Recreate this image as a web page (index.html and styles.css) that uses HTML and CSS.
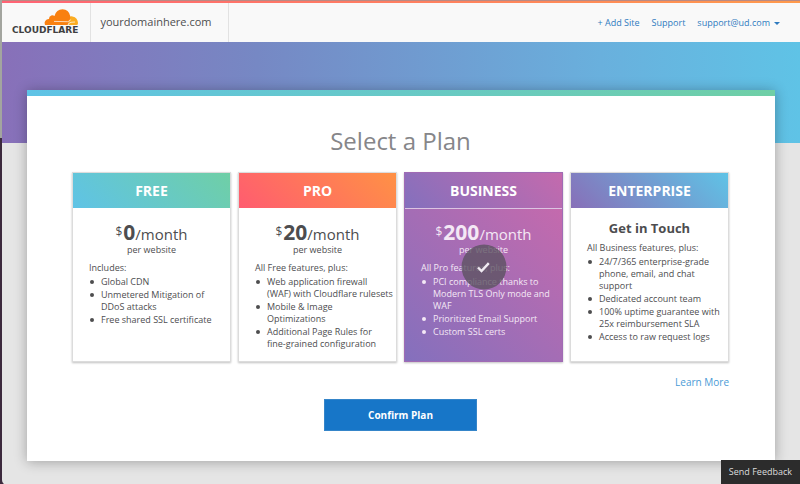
FILE: index.html
```html
<!DOCTYPE html>
<html lang="en">
<head>
    <meta charset="UTF-8">
    <meta name="viewport" content="width=device-width, initial-scale=1.0">
    <title>Select a Plan | Cloudflare</title>
    <link rel="stylesheet" href="styles.css">
</head>
<body>

<div class="page">
    <header class="topbar">
        <a class="logo" href="#" aria-label="Cloudflare">
            <svg class="logo-cloud" viewBox="0 0 34 16" aria-hidden="true">
                <path fill="#fbad22" d="M24 16 L25.5 11 L25 8 Q27 6.7 28.5 7.4 Q33.8 8.6 34 14 Q34 16 33 16Z"/>
                <path fill="#f98010" d="M1 16 Q0 13.5 1.2 12 Q2.6 10 5 10.1 Q4.9 7.4 7.3 6.5 Q9 6 10.5 7 Q12.3 0.4 18.5 0.3 Q24.8 .6 26.2 7 Q26.6 9 25.6 11.2 L23.8 16Z"/>
                <path fill="none" stroke="#fff" stroke-width=".7" d="M10 12.4 L23.5 12.7 Q26 12.4 26.5 10.6 M24 16 Q24.6 13.8 27 13.3 L31 13"/>
            </svg>
            <span class="logo-text">CLOUDFLARE</span>
        </a>
        <span class="domain">yourdomainhere.com</span>
        <nav class="nav">
            <a href="#">+ Add Site</a>
            <a href="#">Support</a>
            <a class="account" href="#">support@ud.com</a>
        </nav>
    </header>

    <main class="main">
        <section class="panel">
            <h1>Select a Plan</h1>

            <div class="plans">
                <article class="plan free">
                    <h2>FREE</h2>
                    <div class="plan-body">
                        <p class="price"><span class="currency">$</span><strong>0</strong>/month</p>
                        <p class="per">per website</p>
                        <p class="intro">Includes:</p>
                        <ul>
                            <li>Global CDN</li>
                            <li>Unmetered Mitigation of<br>DDoS attacks</li>
                            <li>Free shared SSL certificate</li>
                        </ul>
                    </div>
                </article>

                <article class="plan pro">
                    <h2>PRO</h2>
                    <div class="plan-body">
                        <p class="price"><span class="currency">$</span><strong>20</strong>/month</p>
                        <p class="per">per website</p>
                        <p class="intro">All Free features, plus:</p>
                        <ul>
                            <li>Web application firewall<br>(WAF) with Cloudflare rulesets</li>
                            <li>Mobile &amp; Image<br>Optimizations</li>
                            <li>Additional Page Rules for<br>fine-grained configuration</li>
                        </ul>
                    </div>
                </article>

                <article class="plan business selected">
                    <h2>BUSINESS</h2>
                    <div class="plan-body">
                        <p class="price"><span class="currency">$</span><strong>200</strong>/month</p>
                        <p class="per">per website</p>
                        <p class="intro">All Pro features, plus:</p>
                        <ul>
                            <li>PCI compliance thanks to<br>Modern TLS Only mode and WAF</li>
                            <li>Prioritized Email Support</li>
                            <li>Custom SSL certs</li>
                        </ul>
                    </div>
                    <span class="check">
                        <svg viewBox="0 0 14 12" aria-label="Selected">
                            <path d="M1.5 6 L5 9.6 L12.3 1.6" fill="none" stroke="#f0eaf2" stroke-width="2.4"/>
                        </svg>
                    </span>
                </article>

                <article class="plan enterprise">
                    <h2>ENTERPRISE</h2>
                    <div class="plan-body">
                        <p class="contact">Get in Touch</p>
                        <p class="intro">All Business features, plus:</p>
                        <ul>
                            <li>24/7/365 enterprise-grade<br>phone, email, and chat<br>support</li>
                            <li>Dedicated account team</li>
                            <li>100% uptime guarantee with<br>25x reimbursement SLA</li>
                            <li>Access to raw request logs</li>
                        </ul>
                    </div>
                </article>
            </div>

            <a class="learn-more" href="#">Learn More</a>
            <button class="confirm" type="button">Confirm Plan</button>
        </section>
    </main>
</div>

<button class="feedback" type="button">Send Feedback</button>

</body>
</html>
```
FILE: styles.css
```css
* {
    box-sizing: border-box;
}

body {
    margin: 0;
    padding-left: 2px;
    background: linear-gradient(#a3a59f 138px, #3c2a3d 138px);
    color: #4d4d4f;
    font-family: "Open Sans", "Noto Sans", sans-serif;
    font-size: 9px;
    line-height: 12px;
}

h1, h2, p, ul {
    margin: 0;
    padding: 0;
}

a {
    color: #2f7bbf;
    text-decoration: none;
}

button {
    font-family: inherit;
    cursor: pointer;
}

.page {
    min-height: 100vh;
    background-color: #e5e5e5;
    border-radius: 0 0 0 5px;
}

/* top bar */
.topbar {
    display: flex;
    height: 42px;
    padding-top: 3px;
    background: linear-gradient(#b98a84, #b98a84) top / 100% 1px no-repeat,
                linear-gradient(90deg, #ff6375, #ff9a4c) top / 100% 3px no-repeat,
                #f9f9f9;
}

.logo {
    display: flex;
    flex-direction: column;
    align-items: flex-end;
    padding: 6px 12px 0 10px;
    border-right: 1px solid #e2e2e2;
}

.logo-cloud {
    width: 34px;
    height: 16px;
}

.logo-text {
    color: #404041;
    font-family: "DejaVu Sans", sans-serif;
    font-size: 9px;
    font-weight: 700;
    line-height: 11px;
}

.domain {
    padding: 0 17px 0 9px;
    border-right: 1px solid #e2e2e2;
    font-size: 11px;
    line-height: 38px;
}

.nav {
    display: flex;
    gap: 12px;
    margin-left: auto;
    padding-right: 20px;
    font-size: 9px;
    line-height: 39px;
}

.account::after {
    content: "";
    display: inline-block;
    margin-left: 4px;
    border: 3px solid transparent;
    border-top-color: #2f7bbf;
    border-bottom: 0;
    vertical-align: middle;
}

/* gradient banner runs behind the top of the panel */
.main {
    padding: 48px 25px 24px;
    background: linear-gradient(90deg, #8870b9, #7688c4 32%, #69b0dd 75%, #5fc3e6) top / 100% 101px no-repeat;
}

.panel {
    display: flex;
    flex-direction: column;
    padding: 30px 46px 30px 45px;
    background: linear-gradient(90deg, #5fc3e6, #6fcfa6) top / 100% 6px no-repeat, #fff;
    box-shadow: 0 1px 12px rgba(0, 0, 0, 0.3);
}

h1 {
    margin-bottom: 10px;
    color: #868689;
    font-size: 24px;
    font-weight: 400;
    line-height: 42px;
    text-align: center;
}

.plans {
    display: grid;
    grid-template-columns: repeat(4, 1fr);
    gap: 7px;
}

.plan {
    position: relative;
    min-height: 189px;
    border: 1px solid #dcdcdc;
    background-color: #fff;
    box-shadow: 0 1px 2px rgba(0, 0, 0, 0.25);
}

.plan h2 {
    color: #fff;
    font-size: 14px;
    font-weight: 700;
    line-height: 35px;
    text-align: center;
}

.free h2 {
    background: linear-gradient(45deg, #5fc3e6, #6fcfa6);
}

.pro h2 {
    background: linear-gradient(45deg, #ff5c70, #ff9145);
}

.business h2 {
    background: linear-gradient(45deg, #8470bd, #c46aad);
}

.enterprise h2 {
    background: linear-gradient(45deg, #886fb8, #5fc3e6);
}

.plan-body {
    padding: 12px 0 10px 16px;
}

.price {
    height: 24px;
    margin-right: 16px;
    font-size: 15px;
    line-height: 24px;
    text-align: center;
}

.price strong {
    font-size: 21px;
}

.currency {
    margin-right: 1px;
    font-size: 12px;
    line-height: 12px;
    vertical-align: 4px;
}

.per {
    margin: 0 16px 6px 0;
    text-align: center;
}

.contact {
    margin: 0 16px 5px 0;
    font-size: 13px;
    font-weight: 700;
    line-height: 17px;
    text-align: center;
}

.intro {
    margin-bottom: 2px;
}

.plan ul {
    list-style: none;
}

.plan li {
    position: relative;
    margin-bottom: 1px;
    padding-left: 12px;
}

.plan li::before {
    content: "";
    position: absolute;
    top: 4px;
    left: 1px;
    width: 4px;
    height: 4px;
    border-radius: 50%;
    background-color: currentColor;
}

.selected {
    display: flex;
    flex-direction: column;
    border-color: #a06bb4;
    color: #f4e8f5;
}

.selected h2 {
    border-bottom: 1px solid #dcc4e2;
}

.selected .plan-body {
    flex: 1;
    padding-top: 11px;
    background: linear-gradient(45deg, #8470bd, #c46aad);
}

.check {
    position: absolute;
    top: 50%;
    left: 50%;
    display: flex;
    align-items: center;
    justify-content: center;
    width: 45px;
    height: 45px;
    border-radius: 50%;
    background-color: rgba(93, 82, 98, 0.8);
    transform: translate(-50%, -50%);
}

.check svg {
    width: 14px;
    height: 12px;
}

.learn-more {
    align-self: flex-end;
    margin: 14px 0 10px;
    color: #4a9bd6;
    font-size: 10px;
    line-height: 13px;
}

.confirm {
    align-self: center;
    padding: 0 43px;
    border: 1px solid #3585c9;
    background-color: #1776c8;
    color: #fff;
    font-size: 10px;
    font-weight: 700;
    line-height: 30px;
}

.feedback {
    position: fixed;
    right: 0;
    bottom: 0;
    padding: 0 8px;
    border: 0;
    background-color: #2c2c2c;
    color: #dcdcdc;
    font-size: 9px;
    line-height: 24px;
}
```
